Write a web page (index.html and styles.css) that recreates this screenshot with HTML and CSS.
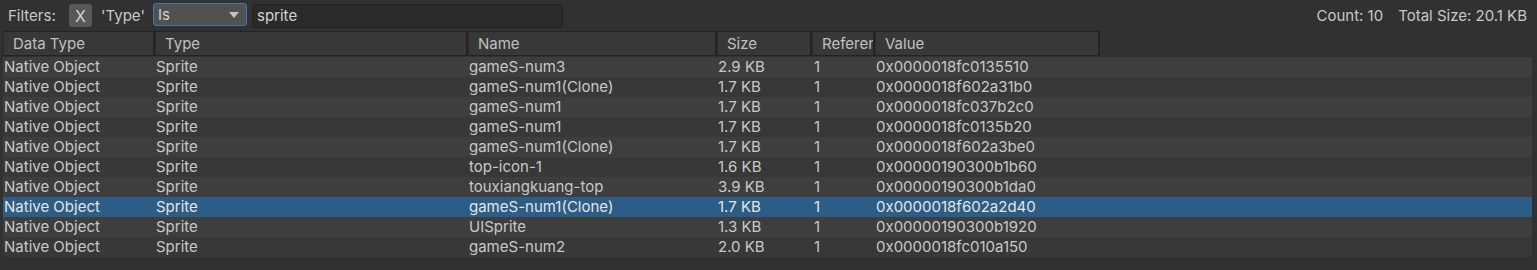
FILE: index.html
```html
<!DOCTYPE html>
<html lang="en">
<head>
  <meta charset="UTF-8">
  <title>Memory Profiler - Filter</title>
  <link rel="stylesheet" href="styles.css">
</head>
<body>
  <div class="panel">
    <div class="toolbar">
      <span class="label">Filters:</span>
      <button class="clear-btn">X</button>
      <span class="label field-name">'Type'</span>
      <div class="dropdown">
        <span>Is</span>
        <svg class="arrow" width="10" height="6" viewBox="0 0 10 6"><path d="M0 0 H10 L5 6 Z" fill="#c4c4c4"/></svg>
      </div>
      <div class="search">sprite</div>
      <div class="stats">
        <span>Count: 10</span>
        <span>Total Size: 20.1 KB</span>
      </div>
    </div>

    <div class="table">
      <div class="header">
        <div class="col c-dtype">Data Type</div>
        <div class="col c-type">Type</div>
        <div class="col c-name">Name</div>
        <div class="col c-size">Size</div>
        <div class="col c-ref">References</div>
        <div class="col c-value">Value</div>
      </div>
      <div class="rows" id="rows"></div>
    </div>
  </div>

  <script>
    // 数据
    const items = [
      ['gameS-num3', '2.9 KB', '0x0000018fc0135510'],
      ['gameS-num1(Clone)', '1.7 KB', '0x0000018f602a31b0'],
      ['gameS-num1', '1.7 KB', '0x0000018fc037b2c0'],
      ['gameS-num1', '1.7 KB', '0x0000018fc0135b20'],
      ['gameS-num1(Clone)', '1.7 KB', '0x0000018f602a3be0'],
      ['top-icon-1', '1.6 KB', '0x00000190300b1b60'],
      ['touxiangkuang-top', '3.9 KB', '0x00000190300b1da0'],
      ['gameS-num1(Clone)', '1.7 KB', '0x0000018f602a2d40'],
      ['UISprite', '1.3 KB', '0x00000190300b1920'],
      ['gameS-num2', '2.0 KB', '0x0000018fc010a150']
    ];
    const selected = 7;

    const rows = document.getElementById('rows');
    items.forEach((it, i) => {
      const row = document.createElement('div');
      row.className = 'row' + (i % 2 === 0 ? ' odd' : '') + (i === selected ? ' selected' : '');
      row.innerHTML =
        '<div class="cell c-dtype">Native Object</div>' +
        '<div class="cell c-type">Sprite</div>' +
        '<div class="cell c-name">' + it[0] + '</div>' +
        '<div class="cell c-size">' + it[1] + '</div>' +
        '<div class="cell c-ref">1</div>' +
        '<div class="cell c-value">' + it[2] + '</div>';
      rows.appendChild(row);
    });
  </script>
</body>
</html>
```

FILE: styles.css
```css
body {
  margin: 0;
  background: #313131;
  font-family: Inter, "Noto Sans", sans-serif;
  font-size: 15px;
  color: #c8c8c8;
}

.panel {
  height: 270px;
  overflow: hidden;
}

/* 过滤栏 */
.toolbar {
  display: flex;
  align-items: center;
  height: 31px;
  padding: 0 10px 0 8px;
  box-sizing: border-box;
}
.label { width: 49px; }
.clear-btn {
  width: 23px;
  height: 23px;
  margin-left: 12px;
  padding: 0;
  border: none;
  border-radius: 3px;
  background: #585858;
  color: #d2d2d2;
  font: inherit;
  font-size: 16px;
}
.field-name { width: 46px; margin-left: 9px; }
.dropdown {
  display: flex;
  align-items: center;
  justify-content: space-between;
  width: 94px;
  height: 23px;
  margin-left: 6px;
  padding: 0 7px 0 4px;
  box-sizing: border-box;
  border: 1px solid #3a79bb;
  border-radius: 3px;
  background: #515151;
  color: #d2d2d2;
  position: relative;
  top: -1px;
}
.search {
  width: 311px;
  height: 24px;
  margin-left: 5px;
  padding-left: 4px;
  box-sizing: border-box;
  border: 1px solid #212121;
  border-radius: 3px;
  background: #2a2a2a;
  color: #d2d2d2;
  line-height: 22px;
}
.stats {
  margin-left: auto;
  display: flex;
  gap: 15px;
}

/* 表格 */
.table { margin-left: 3px; }
.header {
  display: flex;
  width: 1097px;
  height: 25px;
  box-sizing: border-box;
  border-top: 1px solid #232323;
  border-bottom: 1px solid #232323;
  background: #383838;
}
.col {
  box-sizing: border-box;
  padding-left: 9px;
  line-height: 23px;
  border-right: 2px solid #242424;
  border-left: 1px solid #2c2c2c;
  color: #c0c0c0;
  white-space: nowrap;
  overflow: hidden;
  text-overflow: clip;
}

.c-dtype { width: 152px; }
.c-type { width: 313px; }
.c-name { width: 249px; }
.c-size { width: 95px; }
.c-ref { width: 63px; }
.c-value { width: 225px; }

.rows { width: 1529px; margin-top: 1px; }
.row {
  display: flex;
  height: 20px;
  line-height: 20px;
  background: #383838;
}
.row.odd { background: #3e3e3e; }
.row.selected { background: #2c5d87; color: #e4e4e4; }
.cell {
  box-sizing: border-box;
  padding-left: 1px;
  white-space: nowrap;
  overflow: hidden;
}
.cell.c-ref { padding-left: 2px; }
```
